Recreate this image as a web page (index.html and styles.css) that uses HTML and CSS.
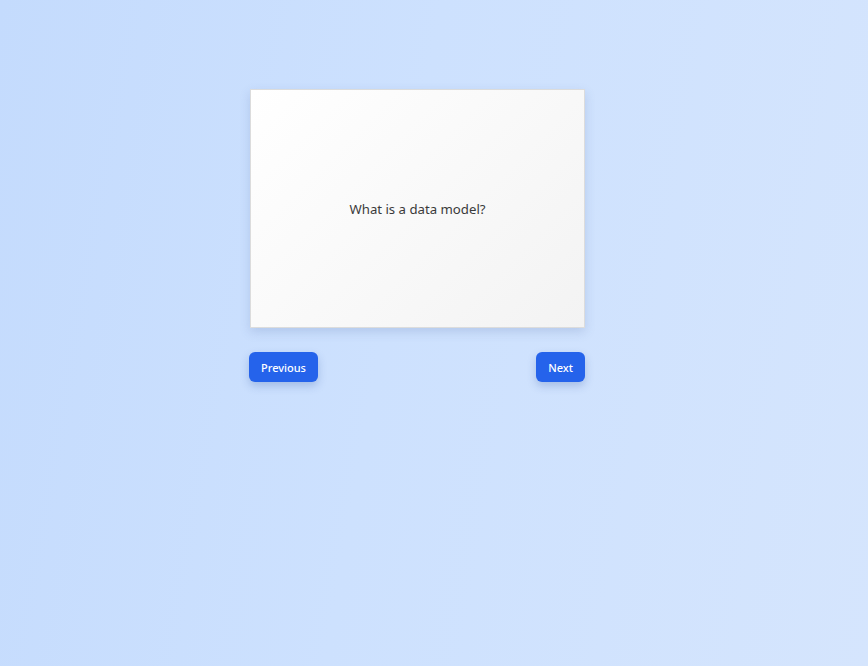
FILE: index.html
```html
<!DOCTYPE html>
<html>
<head>
<meta charset="utf-8">
<link rel="stylesheet" href="styles.css">
</head>
<body>
<div class="page">
  <div class="deck">
    <div class="card">
      <p class="question">What is a data model?</p>
    </div>
    <div class="controls">
      <button class="btn">Previous</button>
      <button class="btn">Next</button>
    </div>
  </div>
</div>
</body>
</html>
```
FILE: styles.css
```css
html, body {
  margin: 0;
  padding: 0;
  height: 100%;
}
body {
  background: linear-gradient(100deg, #c4dbfd 0%, #cde1fe 45%, #d5e5fd 100%);
  font-family: "Noto Sans", "Open Sans", sans-serif;
}
.page {
  padding-top: 89px;
  padding-left: 250px;
}
.deck {
  width: 335px;
  display: flex;
  flex-direction: column;
  gap: 24px;
}
.card {
  height: 237px;
  border: 1px solid #dcdcdc;
  background: linear-gradient(135deg, #ffffff 0%, #f9f9f9 50%, #f3f3f3 100%);
  box-shadow: 0 4px 10px rgba(60, 90, 150, 0.18);
  display: flex;
  align-items: center;
  justify-content: center;
}
.question {
  margin: 0;
  font-size: 13.2px;
  color: #3a3a3a;
}
.controls {
  display: flex;
  justify-content: space-between;
  margin-left: -1px;
}
.btn {
  border: none;
  background: #2563eb;
  color: #ffffff;
  font-family: "Noto Sans", "Open Sans", sans-serif;
  font-size: 11px;
  font-weight: 500;
  height: 30px;
  padding: 0 12px;
  border-radius: 6px;
  box-shadow: 0 4px 8px rgba(40, 80, 160, 0.25);
  cursor: pointer;
}
```
